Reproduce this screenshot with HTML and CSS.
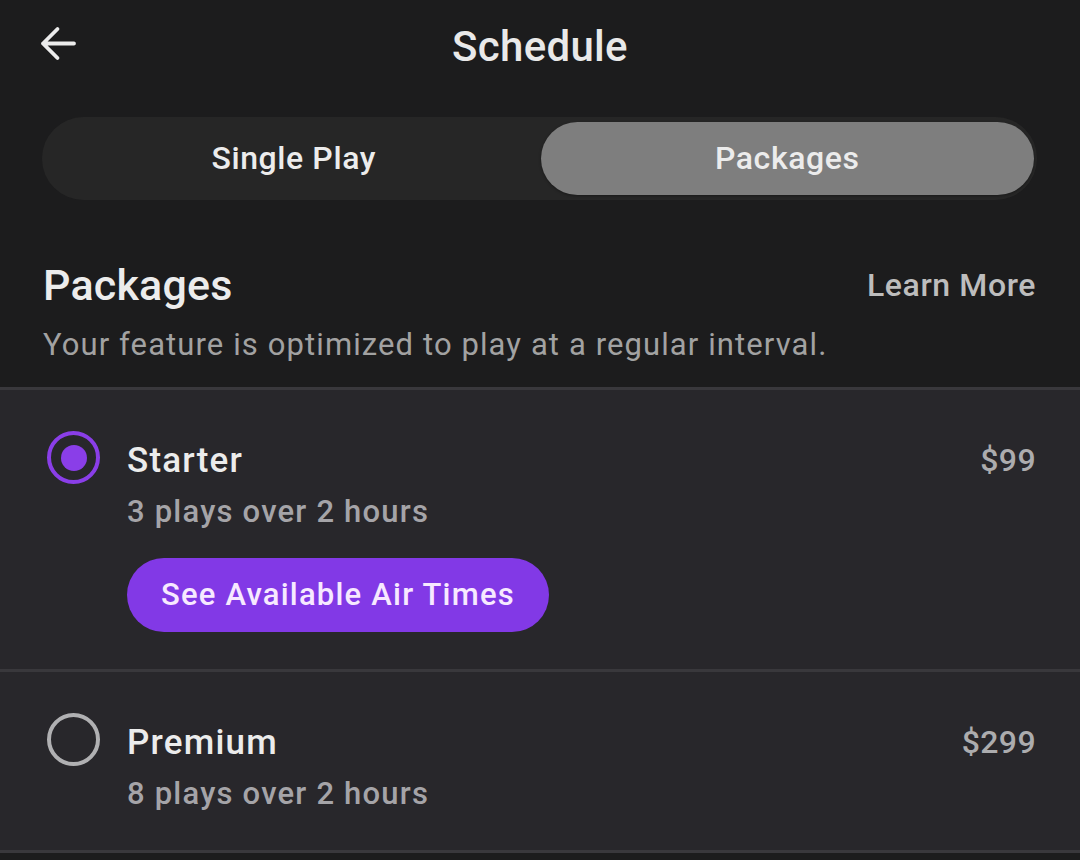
FILE: index.html
```html
<!DOCTYPE html>
<html>
<head>
<meta charset="utf-8">
<link rel="stylesheet" href="styles.css">
</head>
<body>
<div class="screen">
  <header class="topbar">
    <button class="back" aria-label="Back">
      <svg width="36" height="36" viewBox="0 0 36 36"><path d="M34 17.5H3M17.5 3L3 17.5L17.5 32" fill="none" stroke="#ececec" stroke-width="3.8" stroke-linecap="round" stroke-linejoin="round"/></svg>
    </button>
    <h1 class="title">Schedule</h1>
  </header>

  <div class="segmented">
    <div class="seg">Single Play</div>
    <div class="seg active">Packages</div>
  </div>

  <section class="intro">
    <div class="intro-head">
      <h2>Packages</h2>
      <a class="learn">Learn More</a>
    </div>
    <p class="desc">Your feature is optimized to play at a regular interval.</p>
  </section>

  <div class="list">
    <div class="item">
      <span class="radio checked"></span>
      <div class="body">
        <div class="row"><span class="name">Starter</span><span class="price">$99</span></div>
        <div class="sub">3 plays over 2 hours</div>
        <button class="cta">See Available Air Times</button>
      </div>
    </div>
    <div class="item">
      <span class="radio"></span>
      <div class="body">
        <div class="row"><span class="name">Premium</span><span class="price">$299</span></div>
        <div class="sub">8 plays over 2 hours</div>
      </div>
    </div>
  </div>
</div>
</body>
</html>
```
FILE: styles.css
```css
* { box-sizing: border-box; }
html, body { margin: 0; padding: 0; }
body {
  background: #1c1c1d;
  font-family: Roboto, "Noto Sans", sans-serif;
  color: #ececec;
  width: 1080px;
  height: 860px;
  overflow: hidden;
}
.screen { display: flex; flex-direction: column; }

.topbar {
  position: relative;
  height: 95px;
  display: flex;
  align-items: center;
  justify-content: center;
}
.back {
  position: absolute;
  left: 40px;
  top: 26px;
  background: none;
  border: 0;
  padding: 0;
  width: 36px;
  height: 36px;
}
.back svg { display: block; }
.title {
  margin: 0 0 2px;
  font-size: 42px;
  font-weight: 500;
  letter-spacing: 0.3px;
  color: #e9e9e9;
}

.segmented {
  margin: 22px 43px 0 42px;
  height: 83px;
  border-radius: 42px;
  background: #262626;
  padding: 5px 3px 5px 5px;
  display: grid;
  grid-template-columns: 1fr 1fr;
}
.seg {
  display: flex;
  align-items: center;
  justify-content: center;
  font-size: 32px;
  font-weight: 500;
  letter-spacing: 0.6px;
  color: #ececec;
  border-radius: 37px;
  padding-bottom: 2px;
}
.seg.active {
  background: #7e7e7e;
  box-shadow: 0 1px 3px rgba(0,0,0,0.35);
}

.intro { padding: 60px 44px 0 43px; height: 187px; }
.intro-head {
  display: flex;
  justify-content: space-between;
  align-items: center;
}
.intro h2 {
  margin: 0;
  font-size: 43px;
  font-weight: 500;
  line-height: 50px;
  color: #ececec;
  letter-spacing: 0.2px;
}
.learn {
  font-size: 32px;
  font-weight: 500;
  color: #bdbdbd;
  letter-spacing: 0.6px;
}
.desc {
  margin: 15px 0 0;
  font-size: 31px;
  color: #a2a2a2;
  letter-spacing: 1.1px;
  line-height: 40px;
}

.list { background: #28272b; }
.item {
  display: flex;
  align-items: flex-start;
  border-top: 3px solid #39383c;
  padding: 41px 44px 37px 47px;
}
.item:last-child { border-bottom: 3px solid #39383c; padding-bottom: 36px; }
.radio {
  flex: none;
  width: 53px;
  height: 53px;
  border-radius: 50%;
  border: 4px solid #b0b0b2;
  display: flex;
  align-items: center;
  justify-content: center;
}
.radio.checked { border-color: #8a3ee8; }
.radio.checked::after {
  content: "";
  width: 26px;
  height: 26px;
  border-radius: 50%;
  background: #8a3ee8;
}
.body { flex: 1; margin-left: 27px; }
.row {
  display: flex;
  justify-content: space-between;
  align-items: center;
  height: 58px;
}
.name {
  font-size: 35px;
  font-weight: 500;
  color: #ececec;
  letter-spacing: 1.2px;
}
.price {
  font-size: 32px;
  font-weight: 500;
  color: #acacae;
  letter-spacing: 0.4px;
}
.sub {
  margin-top: 3px;
  font-size: 31px;
  font-weight: 500;
  color: #a5a4a8;
  letter-spacing: 1.2px;
  line-height: 40px;
}
.cta {
  margin-top: 26px;
  height: 74px;
  padding: 0 34px 2px;
  border: 0;
  border-radius: 37px;
  background: #8239e6;
  color: #f7e9ff;
  font-family: Roboto, "Noto Sans", sans-serif;
  font-size: 31px;
  font-weight: 500;
  letter-spacing: 1.2px;
}
```
